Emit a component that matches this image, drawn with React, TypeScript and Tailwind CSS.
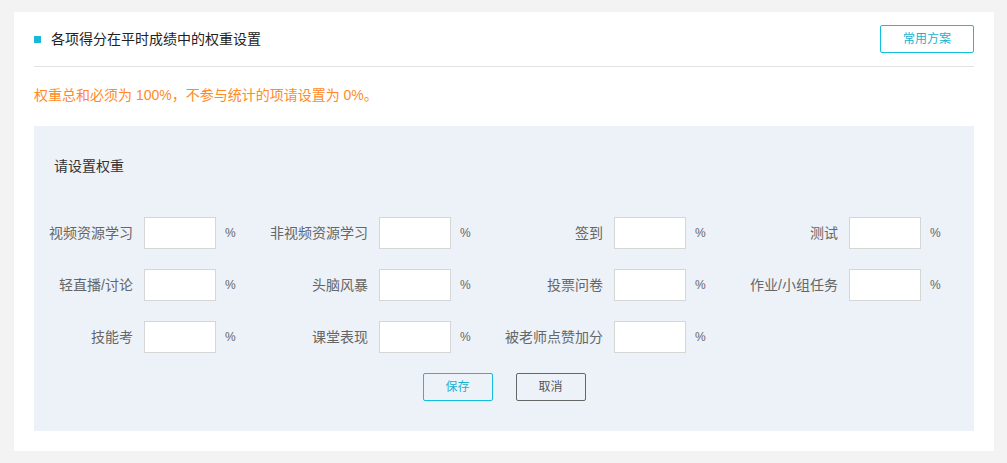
const items = [
  "视频资源学习",
  "非视频资源学习",
  "签到",
  "测试",
  "轻直播/讨论",
  "头脑风暴",
  "投票问卷",
  "作业/小组任务",
  "技能考",
  "课堂表现",
  "被老师点赞加分",
];

const font = { fontFamily: '"Liberation Sans", "Noto Sans CJK SC", sans-serif' };

export default function App() {
  return (
    <div className="min-h-screen bg-[#f3f3f3] pl-[14px] pt-[12px]" style={font}>
      <div className="w-[980px] bg-white px-5 pb-5">
        {/* header */}
        <div className="flex h-[55px] items-center justify-between border-b border-[#e2e2e2]">
          <div className="flex items-center">
            <span className="mr-[10px] h-[7px] w-[7px] bg-[#1ab7d6]" />
            <h1 className="text-[14px] leading-5 text-[#222]">各项得分在平时成绩中的权重设置</h1>
          </div>
          <button className="h-[28px] w-[94px] rounded-[2px] border border-[#0fbfdd] text-[12px] text-[#15b3d1]">
            常用方案
          </button>
        </div>

        <p className="pt-[18px] text-[14px] leading-5 text-[#ff8a1f]">
          权重总和必须为 100%，不参与统计的项请设置为 0%。
        </p>

        {/* panel */}
        <div className="mt-[21px] bg-[#edf2f9] pb-[30px] pt-[30px]">
          <p className="pl-5 text-[14px] leading-5 text-[#333]">请设置权重</p>
          <div className="mt-[41px] grid grid-cols-4 gap-y-5">
            {items.map((label) => (
              <div key={label} className="flex items-center">
                <span className="w-[99px] text-right text-[14px] leading-5 text-[#666]">{label}</span>
                <input
                  type="text"
                  className="ml-[11px] h-[32px] w-[72px] border border-[#d6d6d6] bg-white px-2 text-[13px] outline-none"
                />
                <span className="ml-[9px] text-[12px] text-[#666]">%</span>
              </div>
            ))}
          </div>
          <div className="mt-[20px] flex justify-center gap-[23px]">
            <button className="h-[28px] w-[70px] rounded-[2px] border border-[#0fbfdd] text-[12px] text-[#15b3d1]">
              保存
            </button>
            <button className="h-[28px] w-[70px] rounded-[2px] border border-[#666] text-[12px] text-[#555]">
              取消
            </button>
          </div>
        </div>
      </div>
    </div>
  );
}
